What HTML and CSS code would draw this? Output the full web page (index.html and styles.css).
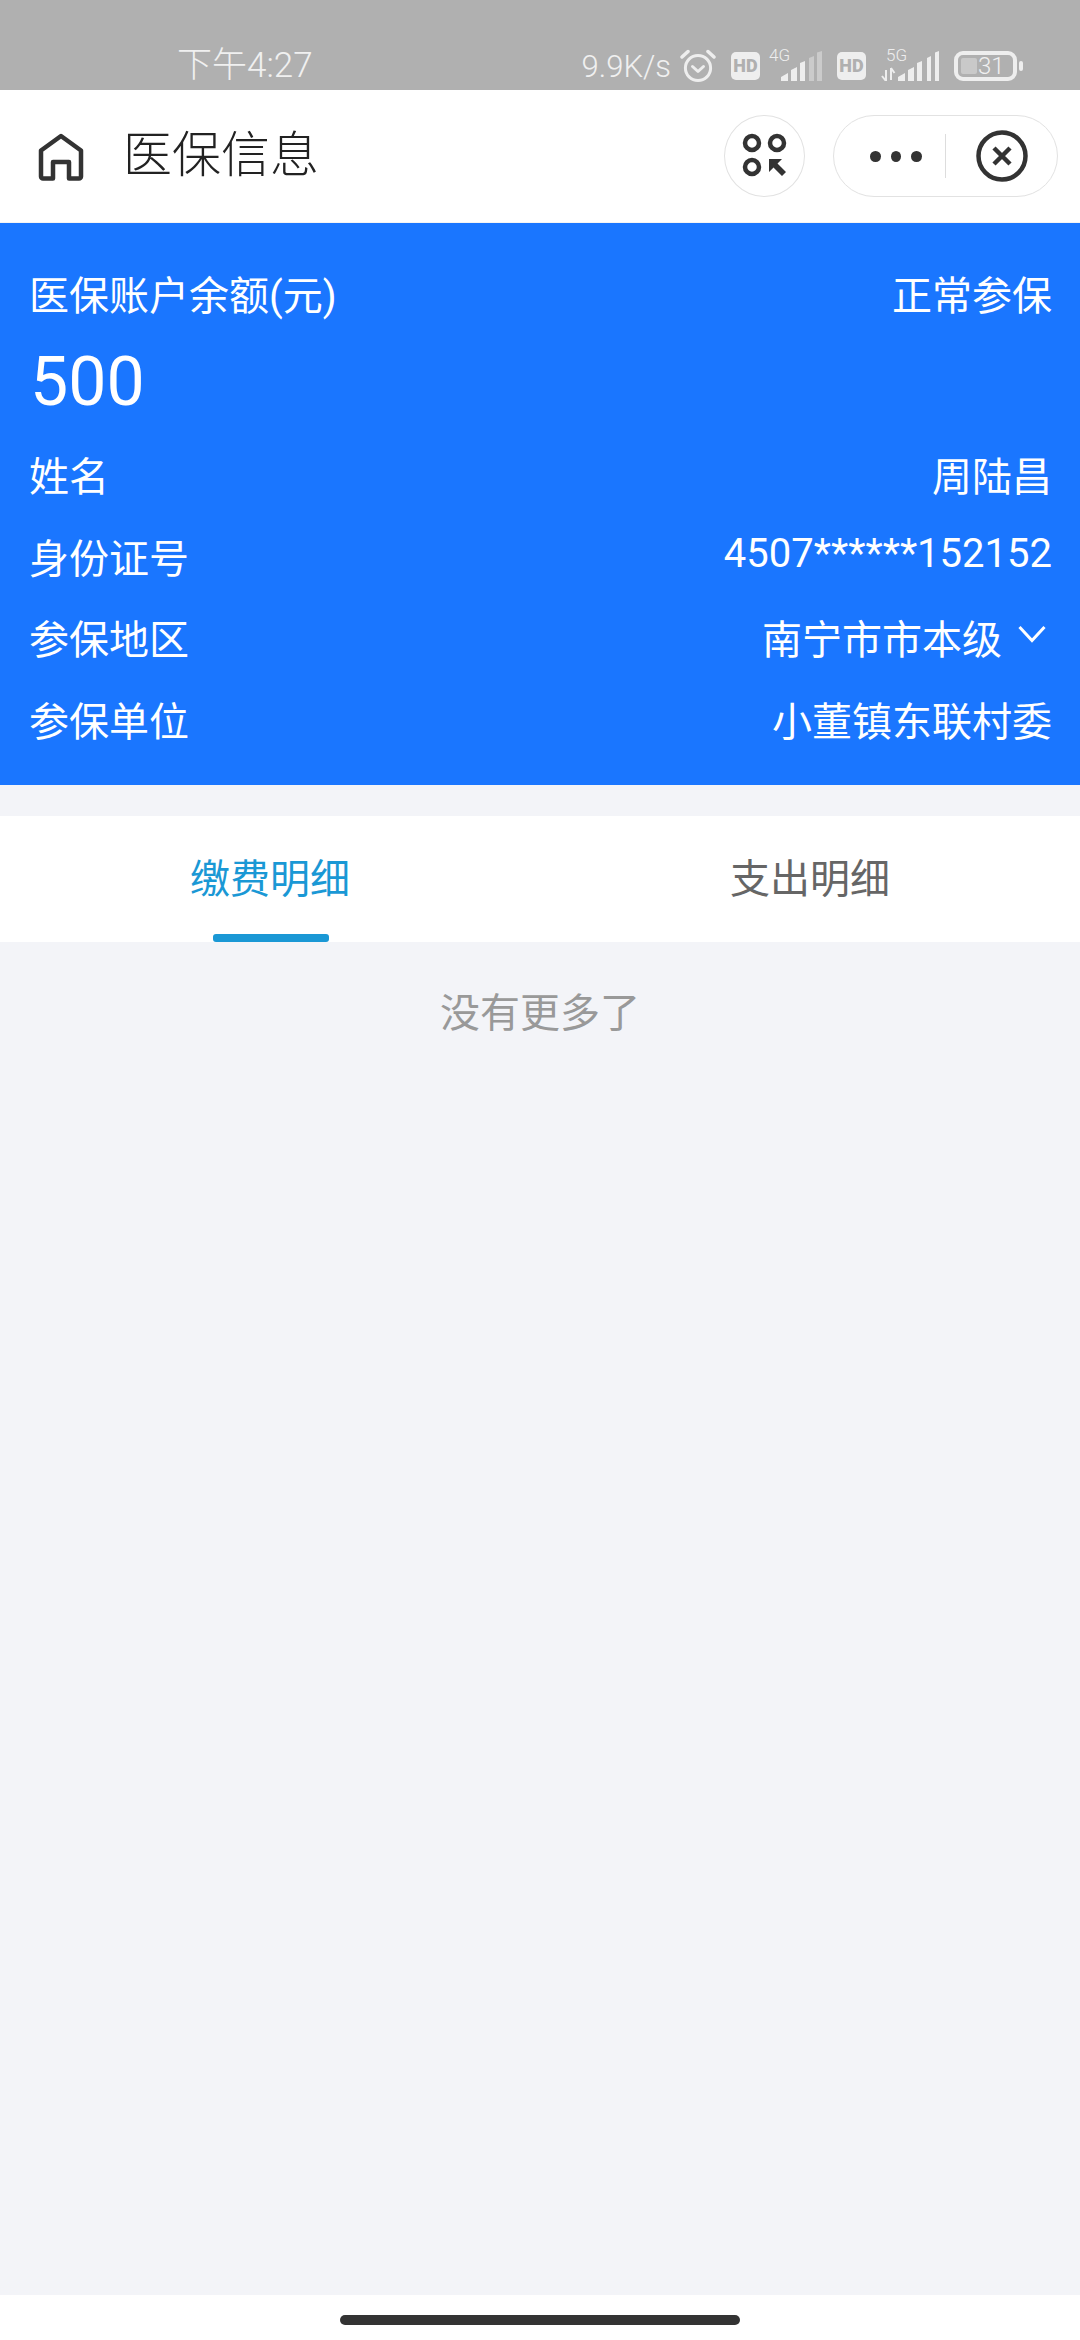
FILE: index.html
```html
<!DOCTYPE html>
<html lang="zh-CN">
<head>
  <meta charset="UTF-8" />
  <meta name="viewport" content="width=device-width, initial-scale=1" />
  <title>医保信息</title>
  <link rel="stylesheet" href="styles.css">
</head>
<body>
  <div class="status-bar">
    <span class="clock">下午4:27</span>
    <div class="status-right">
      <span class="speed">9.9K/s</span>
      <svg class="alarm" width="36" height="34" viewBox="0 0 36 34" fill="none" stroke="#eee">
        <circle cx="18" cy="19" r="12.6" stroke-width="3"/>
        <path d="M12.5 17.5l5.5 5 5.5-5" stroke-width="3" stroke-linecap="round" stroke-linejoin="round"/>
        <path d="M2 8l6-5.500M34 8l-6-5.500" stroke-width="3.500" stroke-linecap="round"/>
      </svg>
      <span class="hd">HD</span>
      <svg class="signal" width="53" height="44" viewBox="0 -14 53 44">
        <text x="0" y="10" class="net">4G</text>
        <path d="M12 30v-4l7-4v8zM22 30V19l6-3v14zM31 30V12l5-2v20z" fill="#eee"/>
        <path d="M40 30V7l5-2v25zM48 30V1.500l5-1.500v30z" fill="#cbcbcb"/>
      </svg>
      <span class="hd hd-second">HD</span>
      <svg class="signal signal-5g" width="58" height="44" viewBox="0 -14 58 44">
        <text x="5" y="10" class="net">5G</text>
        <path d="M5 30V19M5 30l-4-5M10 17v12M10 17l3.500 5" stroke="#eee" stroke-width="2" fill="none"/>
        <path d="M17 30v-4l7-4v8zM27 30V19l6-3v14zM36 30V12l5-2v20zM46 30V7l4-2v25zM54 30V1.500l4-1.500v30z" fill="#eee"/>
      </svg>
      <div class="battery"><i class="battery-fill"></i><span>31</span></div>
      <i class="battery-nub"></i>
    </div>
  </div>

  <header class="nav">
    <svg class="home-icon" width="46" height="48" viewBox="0 0 46 48" fill="none" stroke="#333" stroke-width="4.500" stroke-linejoin="round">
      <path d="M3 17.500L23 3l20 14.500V43.500a2 2 0 0 1-2 2H31V29H15v16.500H5a2 2 0 0 1-2-2z"/>
    </svg>
    <h1>医保信息</h1>
    <div class="nav-actions">
      <div class="round-btn">
        <svg width="46" height="46" viewBox="0 0 46 46" fill="none" stroke="#333" stroke-width="4.500">
          <circle cx="10" cy="10" r="7"/>
          <circle cx="35" cy="10" r="7"/>
          <circle cx="10" cy="34" r="7"/>
          <path d="M27 26h13l-4.500 4.500 8.500 8.500-4 4-8.500-8.500L27 39z" fill="#333" stroke="none"/>
        </svg>
      </div>
      <div class="capsule">
        <div class="dots"><i></i><i></i><i></i></div>
        <i class="capsule-line"></i>
        <svg width="52" height="52" viewBox="0 0 52 52" fill="none" stroke="#333">
          <circle cx="26" cy="26" r="23.500" stroke-width="4.500"/>
          <path d="M18 18l16 16M34 18L18 34" stroke-width="4.500"/>
        </svg>
      </div>
    </div>
  </header>

  <section class="summary">
    <div class="row">
      <span>医保账户余额(元)</span>
      <span>正常参保</span>
    </div>
    <div class="amount">500</div>
    <div class="row">
      <span>姓名</span>
      <span>周陆昌</span>
    </div>
    <div class="row">
      <span>身份证号</span>
      <span class="id-no">4507******152152</span>
    </div>
    <div class="row">
      <span>参保地区</span>
      <span class="region">南宁市市本级
        <svg width="28" height="18" viewBox="0 0 28 18" fill="none" stroke="#fff" stroke-width="3">
          <path d="M1.500 2L14 15.500 26.500 2"/>
        </svg>
      </span>
    </div>
    <div class="row">
      <span>参保单位</span>
      <span>小董镇东联村委</span>
    </div>
  </section>

  <nav class="tabs">
    <div class="tab active">缴费明细</div>
    <div class="tab">支出明细</div>
  </nav>

  <main class="list">
    <p class="no-more">没有更多了</p>
  </main>

  <div class="home-bar"><i></i></div>
</body>
</html>
```

FILE: styles.css
```css
* { box-sizing: border-box; }
html, body {
  margin: 0;
  height: 2340px;
}
body {
  display: flex;
  flex-direction: column;
  background: #f3f4f8;
  color: #fff;
  font-family: Roboto, "Noto Sans CJK SC", sans-serif;
  overflow: hidden;
}
i { display: block; }

.status-bar {
  height: 90px;
  flex: none;
  background: #b0b0b0;
  color: #f0f0f0;
  display: flex;
  align-items: flex-end;
  padding: 0 0 6px 177px;
}
.clock {
  font-size: 35px;
  font-weight: 300;
  line-height: 36px;
}
.status-right {
  margin-left: auto;
  display: flex;
  align-items: center;
  height: 36px;
  padding-right: 57px;
}
.speed {
  font-size: 31px;
  font-weight: 300;
  margin-right: 9px;
}
.alarm { margin-right: 15px; }
.hd {
  width: 29px;
  height: 28px;
  border-radius: 5px;
  background: #eee;
  color: #b0b0b0;
  font-size: 18px;
  font-weight: 900;
  line-height: 28px;
  text-align: center;
}
.signal {
  margin-left: 9px;
  margin-top: -14px;
}
.signal-5g { margin-left: 15px; }
.hd-second { margin-left: 15px; }
.net {
  fill: #eee;
  font-size: 17px;
  font-weight: 300;
}
.battery {
  width: 63px;
  height: 30px;
  margin-left: 15px;
  border: 4px solid #eee;
  border-radius: 9px;
  display: flex;
  align-items: center;
  font-size: 24px;
  font-weight: 300;
  padding-left: 3px;
}
.battery-fill {
  width: 16px;
  height: 16px;
  background: #c9c9c9;
  border-radius: 2px;
}
.battery span { margin-left: 1px; }
.battery-nub {
  width: 4px;
  height: 10px;
  margin-left: 2px;
  border-radius: 2px;
  background: #eee;
}

.nav {
  height: 133px;
  flex: none;
  background: #fff;
  border-bottom: 1px solid #f4f4f4;
  color: #222;
  display: flex;
  align-items: center;
  padding: 0 22px 0 38px;
}
.home-icon { margin-top: 2px; }
.nav h1 {
  margin: 0 0 0 39px;
  font-size: 49px;
  font-weight: 300;
  line-height: 60px;
}
.nav-actions {
  margin-left: auto;
  display: flex;
  align-items: center;
  gap: 28px;
}
.round-btn {
  width: 81px;
  height: 82px;
  border: 1px solid #e2e2e2;
  border-radius: 50%;
  display: flex;
  align-items: center;
  justify-content: center;
}
.capsule {
  width: 225px;
  height: 82px;
  border: 1px solid #e2e2e2;
  border-radius: 41px;
  display: flex;
  align-items: center;
  padding-left: 36px;
}
.dots {
  display: flex;
  gap: 10px;
  width: 52px;
}
.dots i {
  width: 11px;
  height: 11px;
  border-radius: 50%;
  background: #333;
}
.capsule-line {
  width: 1px;
  height: 44px;
  margin: 0 30px 0 23px;
  background: #ddd;
}

.summary {
  height: 562px;
  flex: none;
  background: #1a76ff;
  padding: 33px 28px 22px 29px;
}
.row {
  height: 81.5px;
  display: flex;
  align-items: center;
  justify-content: space-between;
  font-size: 40px;
  line-height: 50px;
}
.amount {
  height: 88px;
  margin-bottom: 12px;
  padding-left: 1px;
  font-size: 68px;
  line-height: 88px;
}
.id-no { margin-top: -12px; }
.region {
  display: flex;
  align-items: center;
  gap: 16px;
}
.region svg { margin-top: -14px; margin-right: 6px; }

.tabs {
  height: 126px;
  flex: none;
  margin-top: 31px;
  background: #fff;
  display: flex;
}
.tab {
  flex: 1;
  display: flex;
  align-items: center;
  justify-content: center;
  position: relative;
  padding-bottom: 6px;
  color: #666;
  font-size: 40px;
}
.tab.active { color: #1a98d5; }
.tab.active::after {
  content: "";
  position: absolute;
  left: 213px;
  bottom: 0;
  width: 116px;
  height: 8px;
  border-radius: 3px;
  background: #1a98d5;
}

.list { flex: 1; }
.no-more {
  margin: 47px 0 0;
  color: #999;
  font-size: 40px;
  line-height: 50px;
  text-align: center;
}

.home-bar {
  height: 45px;
  flex: none;
  background: #fff;
  padding-top: 20px;
}
.home-bar i {
  width: 400px;
  height: 10px;
  margin: 0 auto;
  border-radius: 5px;
  background: #333;
}
```
